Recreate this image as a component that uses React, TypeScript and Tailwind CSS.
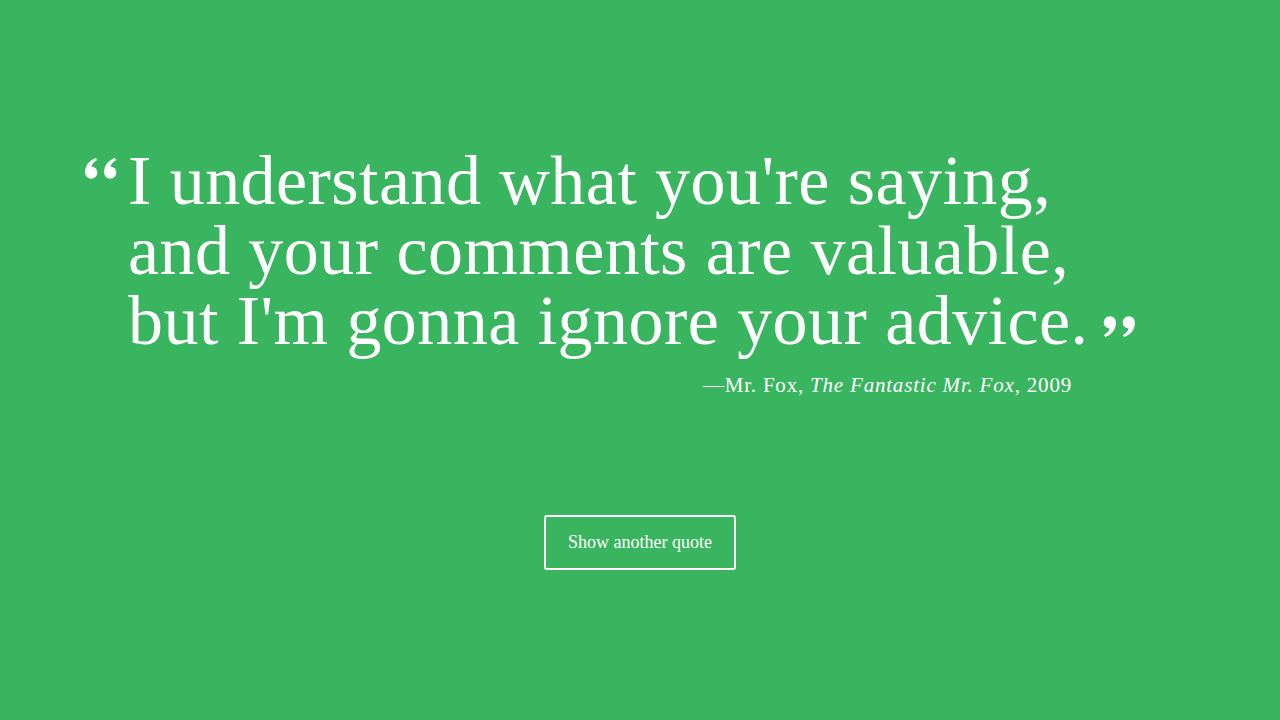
function QuoteMark({ close = false }: { close?: boolean }) {
  // two ball-and-tail marks, "66" for open, rotated to "99" for close
  const mark = (x: number) => (
    <g transform={`translate(${x} 0)`}>
      <circle cx="6.2" cy="14.6" r="6.1" />
      <path d="M0.1 14.6 C0.1 7.5 4 2.6 10.8 0 L12.2 1.9 C8.2 4.2 6.4 7 6.4 9 Z" />
    </g>
  );
  return (
    <svg
      width="32"
      height="21"
      viewBox="0 0 32 21"
      fill="white"
      className={close ? "inline-block rotate-180 align-[7px]" : "block"}
    >
      {mark(0)}
      {mark(19)}
    </svg>
  );
}

export default function App() {
  return (
    <main className="flex h-[720px] w-full flex-col bg-[#38b55e] text-white">
      {/* Quote */}
      <section className="flex flex-col pt-[146px]">
        <div className="flex pl-[85px]">
          <span className="w-[43px] shrink-0 pt-[12px]">
            <QuoteMark />
          </span>
          <p className="font-['Liberation_Serif',serif] text-[70px] leading-[70px] tracking-[0.45px]">
            I understand what you're saying,
            <br />
            and your comments are valuable,
            <br />
            but I'm gonna ignore your advice.
            <span className="ml-[14px]">
              <QuoteMark close />
            </span>
          </p>
        </div>
        <p className="mt-[14px] w-[1072px] text-right font-['Liberation_Serif',serif] text-[21px] tracking-[0.8px]">
          —Mr. Fox, <em>The Fantastic Mr. Fox</em>, 2009
        </p>
      </section>

      {/* Button */}
      <div className="flex justify-center pt-[113px]">
        <button className="h-[55px] w-[192px] rounded-[3px] border-2 border-white font-['Liberation_Serif',serif] text-[18px] text-white">
          Show another quote
        </button>
      </div>
    </main>
  );
}
